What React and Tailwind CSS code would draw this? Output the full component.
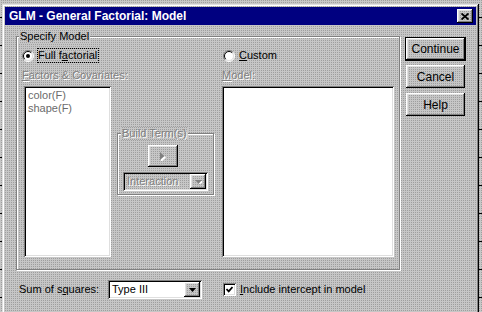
import React from 'react';

const dither = "bg-[#c0c0c0] bg-[repeating-conic-gradient(#9e9e9e_0%_25%,#c6c6c6_0%_100%)] bg-[length:2px_2px]";
const raised = "shadow-[inset_-1px_-1px_0_#000,inset_1px_1px_0_#fff,inset_-2px_-2px_0_#808080,inset_2px_2px_0_#dfdfdf]";
const sunken = "shadow-[inset_1px_1px_0_#808080,inset_-1px_-1px_0_#fff,inset_2px_2px_0_#000,inset_-2px_-2px_0_#dfdfdf]";
const dotted = "bg-white bg-[radial-gradient(circle,#d6d6d6_0.6px,transparent_0.7px)] bg-[length:8px_8px]";
const disabledText = "text-[#808080] [text-shadow:1px_1px_0_#fff]";
const ticks = "bg-[repeating-linear-gradient(to_bottom,transparent_0px,transparent_17px,#000_17px,#000_18px,transparent_18px,transparent_28px)]";

const Radio = ({ checked }) => (
  <svg width="12" height="12" viewBox="0 0 12 12" className="shrink-0">
    <circle cx="6" cy="6" r="5" fill="#fff" />
    <path d="M2.1 9.9 A5.5 5.5 0 0 1 9.9 2.1" stroke="#808080" fill="none" />
    <path d="M9.9 2.1 A5.5 5.5 0 0 1 2.1 9.9" stroke="#fff" fill="none" />
    <path d="M2.8 9.2 A4.5 4.5 0 0 1 9.2 2.8" stroke="#000" fill="none" />
    <path d="M9.2 2.8 A4.5 4.5 0 0 1 2.8 9.2" stroke="#dfdfdf" fill="none" />
    {checked && <circle cx="6" cy="6" r="2" fill="#000" />}
  </svg>
);

const DownArrow = ({ disabled }) => (
  <svg width="7" height="4" viewBox="0 0 7 4">
    {disabled && <path d="M1 1 h7 l-3.5 4 z" fill="#fff" />}
    <path d="M0 0 h7 l-3.5 4 z" fill={disabled ? '#808080' : '#000'} />
  </svg>
);

const Combo = ({ value, disabled, width }) => (
  <div className={`flex h-[19px] items-center p-[2px] ${sunken} ${disabled ? dither : 'bg-white'} ${width}`}>
    <span className={`flex-1 pl-[2px] leading-[13px] ${disabled ? disabledText : 'text-black'}`}>{value}</span>
    <div className={`flex h-[15px] w-[16px] items-center justify-center ${dither} ${raised}`}>
      <DownArrow disabled={disabled} />
    </div>
  </div>
);

const Button = ({ children, className = '' }) => (
  <div className={`flex items-center justify-center ${dither} ${raised} text-[12px] text-black ${className}`}>
    {children}
  </div>
);

export default function App() {
  return (
    <div className={`flex h-[312px] w-[482px] overflow-hidden font-['Liberation_Sans',Arial,sans-serif] text-[11px] ${dither}`}>
      <div className={`h-full w-[2px] shrink-0 ${ticks}`} />

      {/* dialog */}
      <div className={`mt-[4px] h-[320px] w-[477px] shrink-0 p-[3px] ${dither} shadow-[inset_-1px_-1px_0_#000,inset_1px_1px_0_#dfdfdf,inset_-2px_-2px_0_#808080,inset_2px_2px_0_#fff]`}>
        <div className="flex h-[18px] items-center justify-between bg-[#000080] pl-[4px] pr-[3px]">
          <span className="text-[12px] font-bold text-white">GLM - General Factorial: Model</span>
          <div className={`flex h-[14px] w-[16px] items-center justify-center ${dither} ${raised}`}>
            <svg width="8" height="7" viewBox="0 0 8 7">
              <path d="M0.5 0.5 L7.5 6.5 M7.5 0.5 L0.5 6.5" stroke="#000" strokeWidth="1.8" />
            </svg>
          </div>
        </div>

        <div className="flex items-start pl-[11px]">
          <div className="flex flex-col">
            {/* Specify Model group */}
            <div className="relative mt-[11px] h-[234px] w-[384px] border border-[#808080] pl-[5px] pt-[11px] shadow-[inset_1px_1px_0_#fff,1px_1px_0_#fff]">
              <span className={`absolute -top-[7px] left-[2px] px-[1px] leading-[13px] text-black ${dither}`}>Specify Model</span>

              <div className="flex h-[15px] items-center">
                <div className="flex w-[201px] items-center">
                  <Radio checked />
                  <span className="ml-[3px] border border-dotted border-black pr-[1px] leading-[13px] text-black">
                    Full f<u>a</u>ctorial
                  </span>
                </div>
                <Radio />
                <span className="ml-[4px] leading-[13px] text-black"><u>C</u>ustom</span>
              </div>

              <div className="mt-[6px] flex leading-[13px]">
                <span className={`w-[200px] ${disabledText}`}><u>F</u>actors &amp; Covariates:</span>
                <span className={disabledText}><u>M</u>odel:</span>
              </div>

              <div className="mt-[4px] flex items-start">
                <div className={`ml-[2px] h-[171px] w-[87px] pl-[4px] pt-[3px] leading-[13px] text-[#6b6b6b] ${sunken} ${dotted}`}>
                  <div>color(F)</div>
                  <div>shape(F)</div>
                </div>

                <div className="relative ml-[6px] mt-[47px] h-[62px] w-[97px] border border-[#808080] shadow-[inset_1px_1px_0_#fff,1px_1px_0_#fff]">
                  <span className={`absolute -top-[7px] left-[3px] px-[1px] leading-[13px] ${dither} ${disabledText}`}>Build Term(s)</span>
                  <Button className="ml-[30px] mt-[11px] h-[22px] w-[30px]">
                    <svg width="6" height="9" viewBox="0 0 6 9">
                      <path d="M1 1 v9 l5 -4.5 z" fill="#fff" />
                      <path d="M0 0 v8 l4.5 -4 z" fill="#808080" />
                    </svg>
                  </Button>
                  <div className="ml-[5px] mt-[5px]">
                    <Combo value="Interaction" disabled width="w-[85px]" />
                  </div>
                </div>

                <div className={`ml-[8px] h-[171px] w-[172px] ${sunken} ${dotted}`} />
              </div>
            </div>

            {/* bottom row */}
            <div className="ml-[3px] mt-[10px] flex items-center">
              <span className="w-[89px] leading-[13px] text-black">Sum of s<u>q</u>uares:</span>
              <Combo value="Type III" width="w-[94px]" />
              <div className={`ml-[21px] flex h-[13px] w-[13px] items-center justify-center bg-white ${sunken}`}>
                <svg width="7" height="7" viewBox="0 0 7 7">
                  <path d="M0.5 3 L2.7 5.4 L6.5 1" stroke="#000" strokeWidth="1.7" fill="none" />
                </svg>
              </div>
              <span className="ml-[4px] leading-[13px] text-black"><u>I</u>nclude intercept in model</span>
            </div>
          </div>

          {/* buttons */}
          <div className="ml-[5px] mt-[12px] flex flex-col">
            <div className="h-[24px] w-[61px] border border-black">
              <Button className="h-full w-full">Continue</Button>
            </div>
            <Button className="ml-[1px] mt-[4px] h-[23px] w-[59px]">Cancel</Button>
            <Button className="ml-[1px] mt-[5px] h-[23px] w-[59px]">Help</Button>
          </div>
        </div>
      </div>

      <div className={`h-full flex-1 ${ticks}`} />
    </div>
  );
}
